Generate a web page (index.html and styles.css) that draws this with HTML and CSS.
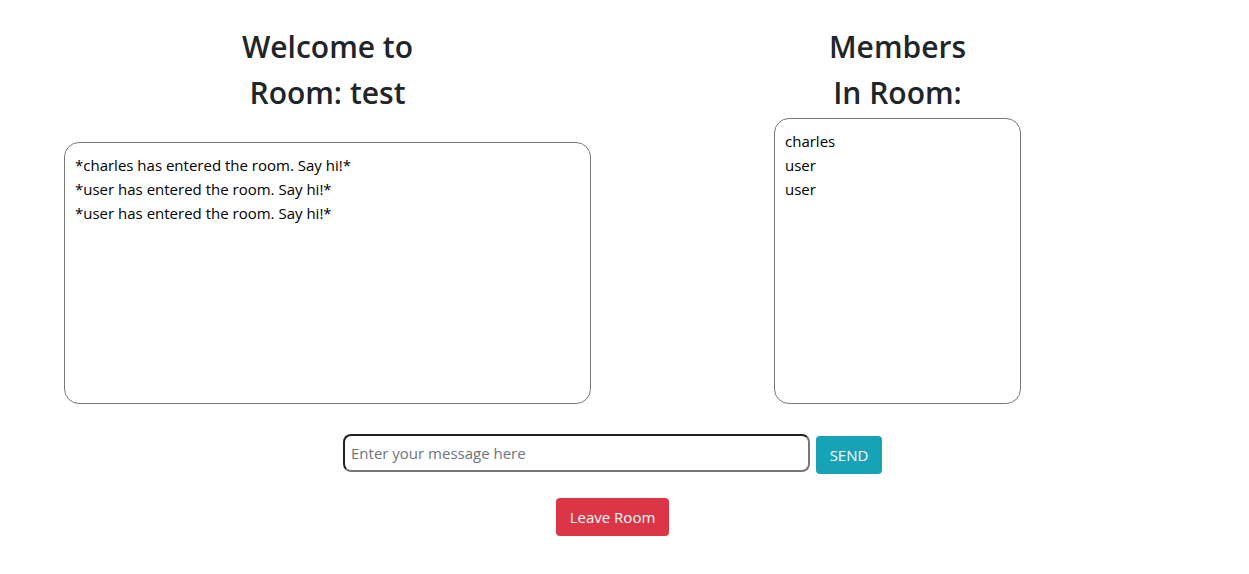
FILE: index.html
```html
<!DOCTYPE html>
<html>
<head>
<meta charset="utf-8">
<link rel="stylesheet" href="styles.css">
</head>
<body>
<div class="page">
  <div class="columns">
    <section class="col col-chat">
      <h2 class="title">Welcome to<br>Room: test</h2>
      <div class="box chat-box">
        <div class="line">*charles has entered the room. Say hi!*</div>
        <div class="line">*user has entered the room. Say hi!*</div>
        <div class="line">*user has entered the room. Say hi!*</div>
      </div>
    </section>
    <section class="col col-members">
      <h2 class="title">Members<br>In Room:</h2>
      <div class="box members-box">
        <div class="line">charles</div>
        <div class="line">user</div>
        <div class="line">user</div>
      </div>
    </section>
  </div>
  <div class="send-row">
    <input class="msg-input" type="text" placeholder="Enter your message here">
    <button class="btn btn-send">SEND</button>
  </div>
  <div class="leave-row">
    <button class="btn btn-leave">Leave Room</button>
  </div>
</div>
</body>
</html>
```

FILE: styles.css
```css
* { box-sizing: border-box; }
html, body { margin: 0; padding: 0; background: #fff; }
body {
  font-family: "Open Sans", "Noto Sans", sans-serif;
  font-size: 15px;
  color: #212529;
}
.page {
  width: 1225px;
}
.columns {
  display: flex;
  align-items: flex-start;
  padding-left: 64px;
  gap: 183px;
}
.col {
  display: flex;
  flex-direction: column;
  align-items: center;
}
.title {
  margin: 24px 0 0;
  font-size: 30px;
  font-weight: 600;
  line-height: 46px;
  text-align: center;
  color: #212529;
}
.box {
  border: 1px solid #777;
  border-radius: 15px;
  padding: 10px 10px;
  line-height: 24px;
  color: #000;
}
.chat-box {
  width: 527px;
  height: 262px;
  margin-top: 26px;
}
.members-box {
  width: 247px;
  height: 286px;
  margin-top: 2px;
}
.send-row {
  display: flex;
  justify-content: center;
  align-items: flex-start;
  gap: 6px;
  margin-top: 30px;
}
.msg-input {
  width: 467px;
  height: 38px;
  border: 2px solid;
  border-color: #222 #777 #777 #222;
  border-radius: 8px;
  padding: 0 6px;
  font-family: inherit;
  font-size: 15px;
  color: #212529;
  outline: none;
}
.msg-input::placeholder { color: #6c757d; }
.btn {
  border: none;
  border-radius: 4px;
  color: #fff;
  font-family: inherit;
  font-size: 15px;
  padding: 0 12px;
  height: 38px;
  cursor: pointer;
}
.btn-send {
  margin-top: 2px;
  width: 66px;
  background: #17a2b8;
}
.leave-row {
  display: flex;
  justify-content: center;
  margin-top: 24px;
}
.btn-leave {
  width: 113px;
  background: #dc3545;
}
```
